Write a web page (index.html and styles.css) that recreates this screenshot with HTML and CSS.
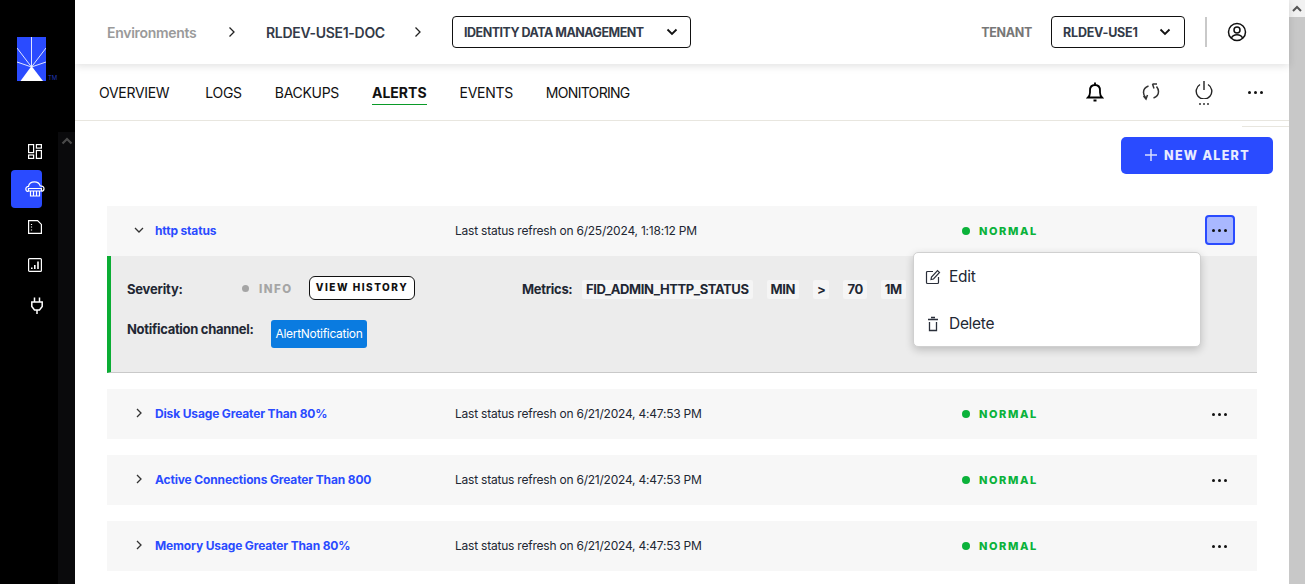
FILE: index.html
```html
<!DOCTYPE html>
<html>
    <head>
        <meta name="viewport" content="width=device-width, initial-scale=1">
        <link rel="stylesheet" href="styles.css">
    </head>
    <body>
        <aside class="sidebar">
            <div class="side-col">
                <div class="logo">
                    <svg width="29" height="44" viewBox="0 0 29 44">
                        <rect width="29" height="44" fill="#2a4bff"/>
                        <g stroke="#dfe5ff" stroke-width="1" fill="none">
                            <path d="M14.500 30V0M14.500 30L0 11M14.500 30L29 11M14.500 30L0 25M14.500 30L29 25"/>
                        </g>
                        <polygon points="14.500,29 26,44 3.500,44" fill="#fff"/>
                    </svg>
                    <span class="tm">TM</span>
                </div>
                <nav class="side-nav">
                    <a class="side-item">
                        <svg width="14" height="15" viewBox="0 0 14 15" fill="none" stroke="#fff" stroke-width="1.200"><rect x=".6" y=".6" width="5" height="8"/><rect x="8.400" y=".6" width="5" height="3.500"/><rect x=".6" y="11" width="5" height="3.400"/><rect x="8.400" y="6.500" width="5" height="7.900"/></svg>
                    </a>
                    <a class="side-item active">
                        <svg width="20" height="16" viewBox="0 0 20 16" fill="none" stroke="#fff" stroke-width="1.200"><path d="M3.500 10.500C1.500 10.500.8 9 .8 8c0-1.500 1.200-2.700 2.700-2.700C4 2.500 6.500.8 9.500.8c3 0 5 1.700 5.700 4 2 0 3.800 1.200 3.800 3 0 1.300-.8 2.300-2.300 2.500"/><path d="M3.500 7.500h13v2.500h-13zM5.500 10v5h9v-5M8.500 10v5M11.500 10v5"/></svg>
                    </a>
                    <a class="side-item">
                        <svg width="14" height="14" viewBox="0 0 14 14" fill="none" stroke="#fff" stroke-width="1.200"><path d="M.6.6h9l3.800 3.800v9H.6z"/><path d="M3.500 4v1M3.500 6.500v1M3.500 9.500v1"/></svg>
                    </a>
                    <a class="side-item">
                        <svg width="14" height="14" viewBox="0 0 14 14" fill="none" stroke="#fff" stroke-width="1.200"><rect x=".6" y=".6" width="12.800" height="12.800" rx="1"/><path d="M3.800 9.500v1.500M6.800 7v4M10 3.500v7.500" stroke-width="1.600"/></svg>
                    </a>
                    <a class="side-item plug">
                        <svg width="12" height="17" viewBox="0 0 12 17" fill="none" stroke="#fff" stroke-width="1.500"><path d="M3.500.5v4.500M8.500.5v4.500M.8 5h10.400v4.500L8.500 13h-5L.8 9.500zM6 13v4"/></svg>
                    </a>
                </nav>
            </div>
            <div class="side-scroll">
                <svg width="12" height="8" viewBox="0 0 12 8" fill="none" stroke="#4a4a4a" stroke-width="2.200"><path d="M1.500 6.500L6 2l4.500 4.500"/></svg>
            </div>
        </aside>

        <div class="main">
            <header class="topbar">
                <span class="crumb-root">Environments</span>
                <svg class="crumb-sep first" width="8" height="12" viewBox="0 0 8 12" fill="none" stroke="#222" stroke-width="1.300"><path d="M1.500 1.500L6 6l-4.500 4.500"/></svg>
                <span class="crumb-env">RLDEV-USE1-DOC</span>
                <svg class="crumb-sep second" width="8" height="12" viewBox="0 0 8 12" fill="none" stroke="#222" stroke-width="1.300"><path d="M1.500 1.500L6 6l-4.500 4.500"/></svg>
                <div class="select app-select">
                    <span>IDENTITY DATA MANAGEMENT</span>
                    <svg width="12" height="8" viewBox="0 0 12 8" fill="none" stroke="#111" stroke-width="1.800"><path d="M1.500 1.500L6 6l4.500-4.500"/></svg>
                </div>
                <span class="tenant-label">TENANT</span>
                <div class="select tenant-select">
                    <span>RLDEV-USE1</span>
                    <svg width="12" height="8" viewBox="0 0 12 8" fill="none" stroke="#111" stroke-width="1.800"><path d="M1.500 1.500L6 6l4.500-4.500"/></svg>
                </div>
                <div class="top-divider"></div>
                <svg class="user-icon" width="20" height="20" viewBox="0 0 20 20" fill="none" stroke="#111" stroke-width="1.500"><circle cx="10" cy="10" r="8.500"/><circle cx="10" cy="8" r="3"/><path d="M4.500 16c1-2.500 3-3.300 5.500-3.300s4.500.8 5.500 3.300"/></svg>
            </header>

            <div class="tabs">
                <a class="tab overview">OVERVIEW</a>
                <a class="tab">LOGS</a>
                <a class="tab">BACKUPS</a>
                <a class="tab active">ALERTS</a>
                <a class="tab">EVENTS</a>
                <a class="tab monitoring">MONITORING</a>
                <div class="tab-icons">
                    <svg class="bell" width="18" height="20" viewBox="0 0 18 20" fill="none" stroke="#000" stroke-width="1.800"><path d="M9 .5v2M2 15.500c1.300-1.300 2-2.500 2-5V8.500C4 5 6 3 9 3s5 2 5 5.500v2c0 2.500.7 3.700 2 5z"/><path d="M7.500 18.500h3" stroke-width="2"/></svg>
                    <svg width="18" height="18" viewBox="0 0 18 18" fill="none" stroke="#333" stroke-width="1.500"><path d="M6.500 3C3.500 4 1.500 6.500 1.500 9.500c0 2 .8 3.500 2 5M1.500 13l2.500 3 1.500-4"/><path d="M11.500 15c3-1 5-3.500 5-6.500 0-2-.8-3.500-2-5M10.500 1H15M10.500 1l1.500 4.500"/></svg>
                    <span class="power">
                        <svg width="18" height="18" viewBox="0 0 18 18" fill="none" stroke="#222" stroke-width="1.400"><path d="M5 3.500a7.800 7.800 0 1 0 8 0M9 0v9"/></svg>
                        <span class="power-dots"><i></i><i></i><i></i></span>
                    </span>
                    <span class="dots"><i></i><i></i><i></i></span>
                </div>
            </div>

            <div class="content">
                <div class="short-line"></div>
                <div class="toolbar">
                    <button class="new-alert">
                        <svg width="14" height="14" viewBox="0 0 14 14" stroke="#d8deff" stroke-width="1.500"><path d="M7 1v12M1 7h12"/></svg>
                        NEW ALERT
                    </button>
                </div>

                <div class="alert open">
                    <div class="alert-head">
                        <svg class="chev" width="10" height="10" viewBox="0 0 10 10" fill="none" stroke="#333" stroke-width="1.300"><path d="M1 3l4 4 4-4"/></svg>
                        <a class="alert-name">http status</a>
                        <span class="alert-time">Last status refresh on 6/25/2024, 1:18:12 PM</span>
                        <span class="status"><i class="dot green"></i>NORMAL</span>
                        <span class="more focused"><span class="dots"><i></i><i></i><i></i></span></span>
                    </div>
                    <div class="alert-body">
                        <div class="body-row first">
                            <span class="body-label severity-label">Severity:</span>
                            <span class="info"><i class="dot grey"></i>INFO</span>
                            <button class="history">VIEW HISTORY</button>
                            <span class="body-label metrics-label">Metrics:</span>
                            <span class="chip">FID_ADMIN_HTTP_STATUS</span>
                            <span class="chip">MIN</span>
                            <span class="chip">&gt;</span>
                            <span class="chip">70</span>
                            <span class="chip">1M</span>
                        </div>
                        <div class="body-row second">
                            <span class="body-label channel-label">Notification channel:</span>
                            <span class="channel">AlertNotification</span>
                        </div>
                    </div>
                    <div class="menu">
                        <div class="menu-item">
                            <svg width="16" height="16" viewBox="0 0 16 16" fill="none" stroke="#2a2f3a" stroke-width="1.200"><path d="M8 2.500H2.500a1 1 0 0 0-1 1v10a1 1 0 0 0 1 1h10a1 1 0 0 0 1-1V8"/><path d="M6 10.500l.5-2.500L12.500 1.500l2 2L8.500 10z"/></svg>
                            <span>Edit</span>
                        </div>
                        <div class="menu-item">
                            <svg width="16" height="16" viewBox="0 0 16 16" fill="none" stroke="#2a2f3a" stroke-width="1.300"><path d="M3 3.500h10M6 1.500h4M4.500 6v8.500h7V6"/></svg>
                            <span>Delete</span>
                        </div>
                    </div>
                </div>

                <div class="alert">
                    <div class="alert-head">
                        <svg class="chev" width="10" height="10" viewBox="0 0 10 10" fill="none" stroke="#333" stroke-width="1.300"><path d="M3 1l4 4-4 4"/></svg>
                        <a class="alert-name">Disk Usage Greater Than 80%</a>
                        <span class="alert-time">Last status refresh on 6/21/2024, 4:47:53 PM</span>
                        <span class="status"><i class="dot green"></i>NORMAL</span>
                        <span class="more"><span class="dots"><i></i><i></i><i></i></span></span>
                    </div>
                </div>

                <div class="alert">
                    <div class="alert-head">
                        <svg class="chev" width="10" height="10" viewBox="0 0 10 10" fill="none" stroke="#333" stroke-width="1.300"><path d="M3 1l4 4-4 4"/></svg>
                        <a class="alert-name">Active Connections Greater Than 800</a>
                        <span class="alert-time">Last status refresh on 6/21/2024, 4:47:53 PM</span>
                        <span class="status"><i class="dot green"></i>NORMAL</span>
                        <span class="more"><span class="dots"><i></i><i></i><i></i></span></span>
                    </div>
                </div>

                <div class="alert">
                    <div class="alert-head">
                        <svg class="chev" width="10" height="10" viewBox="0 0 10 10" fill="none" stroke="#333" stroke-width="1.300"><path d="M3 1l4 4-4 4"/></svg>
                        <a class="alert-name">Memory Usage Greater Than 80%</a>
                        <span class="alert-time">Last status refresh on 6/21/2024, 4:47:53 PM</span>
                        <span class="status"><i class="dot green"></i>NORMAL</span>
                        <span class="more"><span class="dots"><i></i><i></i><i></i></span></span>
                    </div>
                </div>
            </div>
        </div>

        <div class="page-scroll">
            <div class="page-scroll-btn">
                <svg width="10" height="7" viewBox="0 0 10 7" fill="none" stroke="#555" stroke-width="2"><path d="M1 6l4-4 4 4"/></svg>
            </div>
        </div>
    </body>
</html>
```

FILE: styles.css
```css
html, body { width: 100%; height: 100%; overflow: hidden; margin: 0; padding: 0; background-color: #fff; }
body { display: flex; font-family: "Inter", "Liberation Sans", sans-serif; color: #222733; letter-spacing: -0.3px; }
svg { display: block; flex: none; }
i { display: block; }

/* sidebar */
.sidebar { width: 75px; flex: none; background-color: #000; display: flex; }
.side-col { width: 58px; }
.logo { display: flex; align-items: flex-end; padding: 37px 0 0 17px; height: 44px; }
.tm { color: #2238b8; font-size: 6px; letter-spacing: 0; margin-left: 2px; line-height: 7px; }
.side-nav { margin: 51px 0 0 11px; width: 31px; }
.side-item { height: 38px; display: flex; align-items: center; border-radius: 4px; padding-left: 17px; box-sizing: border-box; }
.side-item.active { background-color: #2a4bff; padding-left: 14px; }
.side-item.plug { padding-left: 20px; margin-top: 2px; }
.side-scroll { width: 17px; margin-top: 132px; background-color: #0a0a0c; display: flex; justify-content: center; padding-top: 5px; box-sizing: border-box; }

/* header */
.main { flex: 1; min-width: 0; display: flex; flex-direction: column; }
.topbar { height: 64px; flex: none; display: flex; align-items: center; padding: 0 42px 0 32px; box-shadow: 0 2px 8px rgba(0,0,0,0.12); position: relative; }
.crumb-root { color: #9a9a9a; font-size: 14px; font-weight: 600; width: 121px; }
.crumb-sep.first { margin-right: 30px; }
.crumb-sep.second { margin: 0 30px 0 29px; }
.crumb-env { color: #333a48; font-size: 14px; font-weight: 600; width: 119px; white-space: nowrap; }
.select { height: 32px; box-sizing: border-box; border: 1px solid #111; border-radius: 4px; display: flex; align-items: center; justify-content: space-between; font-size: 12.500px; font-weight: 700; color: #333a48; letter-spacing: -0.5px; }
.app-select { width: 239px; padding: 0 12px 0 11px; }
.tenant-label { color: #777; font-size: 12.500px; font-weight: 700; margin-left: auto; margin-right: 19px; }
.tenant-select { width: 134px; padding: 0 13px 0 11px; letter-spacing: -0.2px; }
.top-divider { width: 2px; height: 30px; background-color: #c9c9c9; margin: 0 20px; }

/* tabs */
.tabs { height: 57px; flex: none; box-sizing: border-box; border-bottom: 1px solid #e8e6df; display: flex; align-items: center; padding: 0 24px; gap: 33px; font-size: 14px; color: #111; }
.tab { height: 25px; line-height: 27px; white-space: nowrap; border-bottom: 1px solid transparent; }
.tab.overview { margin-right: 3px; }
.tab.monitoring { letter-spacing: -0.7px; }
.tab.active { font-weight: 700; letter-spacing: 0; border-bottom-color: #0a9a28; }
.tab-icons { margin-left: auto; display: flex; align-items: center; gap: 35px; padding-right: 2px; }
.bell { margin-right: 3px; }
.power { display: block; margin-top: 2px; }
.power-dots { display: flex; justify-content: center; gap: 2px; margin-top: 4px; }
.power-dots i { width: 2px; height: 2px; background-color: #333; border-radius: 50%; }
.dots { display: flex; gap: 3px; }
.dots i { width: 3px; height: 3px; border-radius: 50%; background-color: #111; }

/* content */
.content { flex: 1; padding: 0 32px; position: relative; }
.short-line { height: 1px; width: 47px; background-color: #e8e6df; margin: 5px -32px 0 auto; }
.toolbar { display: flex; justify-content: flex-end; margin: 10px -16px 32px 0; }
.new-alert { width: 152px; height: 37px; border: 0; border-radius: 5px; background-color: #2a4bff; color: #e8ecff; font-family: "Inter", sans-serif; font-size: 12.500px; font-weight: 800; letter-spacing: 1.300px; display: flex; align-items: center; justify-content: center; gap: 6px; padding-bottom: 2px; }

/* alert rows */
.alert { margin-bottom: 16px; position: relative; }
.alert-head { height: 50px; box-sizing: border-box; padding-bottom: 2px; background-color: #f7f7f7; display: flex; align-items: center; font-size: 12px; }
.chev { margin-left: 27px; width: 10px; }
.alert-name { width: 300px; margin-left: 11px; color: #2a4bff; font-weight: 700; font-size: 12px; letter-spacing: -0.15px; white-space: nowrap; }
.alert-time { width: 507px; color: #222733; letter-spacing: -0.22px; white-space: nowrap; }
.status { display: flex; align-items: center; gap: 9px; color: #0bb23a; font-size: 11px; font-weight: 800; letter-spacing: 1.600px; width: 243px; margin-top: 2px; }
.dot { width: 8px; height: 8px; border-radius: 50%; flex: none; }
.dot.green { background-color: #0bb23a; }
.dot.grey { background-color: #a5a5a5; }
.more { width: 30px; height: 30px; box-sizing: border-box; display: flex; align-items: center; justify-content: center; border-radius: 4px; padding: 2px 2px 0 0; }
.more.focused { background-color: #a9b8ff; border: 2px solid #2a4bff; padding: 0 2px 0 0; }

.alert-body { height: 117px; box-sizing: border-box; background-color: #ececec; border-left: 4px solid #0bad34; border-bottom: 1px solid #c9c9c9; padding: 20px 0 0 16px; }
.body-row { display: flex; align-items: center; }
.body-row.first { height: 24px; }
.body-row.second { height: 28px; margin-top: 20px; }
.body-label { font-size: 13px; font-weight: 700; color: #222733; white-space: nowrap; }
.severity-label { width: 115px; margin-top: 2px; letter-spacing: -0.2px; }
.metrics-label { width: 60px; margin-left: 107px; margin-top: 2px; }
.channel-label { width: 144px; margin-top: -10px; }
.info { display: flex; align-items: center; gap: 10px; color: #a5a5a5; font-size: 11.500px; font-weight: 800; letter-spacing: 1.500px; width: 67px; margin-top: 2px; }
.info .dot { width: 7px; height: 7px; margin-top: -2px; }
.history { width: 106px; height: 24px; padding: 0 0 2px; background-color: #fff; border: 1px solid #111; border-radius: 6px; color: #111; font-family: "Inter", sans-serif; font-size: 10px; font-weight: 800; letter-spacing: 1.500px; white-space: nowrap; }
.chip { background-color: #f5f5f5; border-radius: 2px; height: 19px; line-height: 19px; padding: 0 4px; font-size: 13px; font-weight: 700; margin: 2px 14px 0 0; letter-spacing: -0.4px; white-space: nowrap; }
.channel { background-color: #0a7be0; color: #fff; border-radius: 3px; height: 28px; line-height: 28px; width: 96px; text-align: center; font-size: 12px; white-space: nowrap; }

/* popup menu */
.menu { position: absolute; left: 806px; top: 46px; width: 288px; height: 95px; box-sizing: border-box; background-color: #fff; border: 1px solid #d0d0d0; border-radius: 5px; box-shadow: 0 3px 8px rgba(0,0,0,0.2); }
.menu-item { height: 47px; display: flex; align-items: center; gap: 8px; padding-left: 11px; font-size: 15.500px; color: #222733; }

/* page scrollbar */
.page-scroll { width: 16px; flex: none; background-color: #c8c8c8; }
.page-scroll-btn { height: 17px; background-color: #f1f1f1; display: flex; align-items: center; justify-content: center; }
```
